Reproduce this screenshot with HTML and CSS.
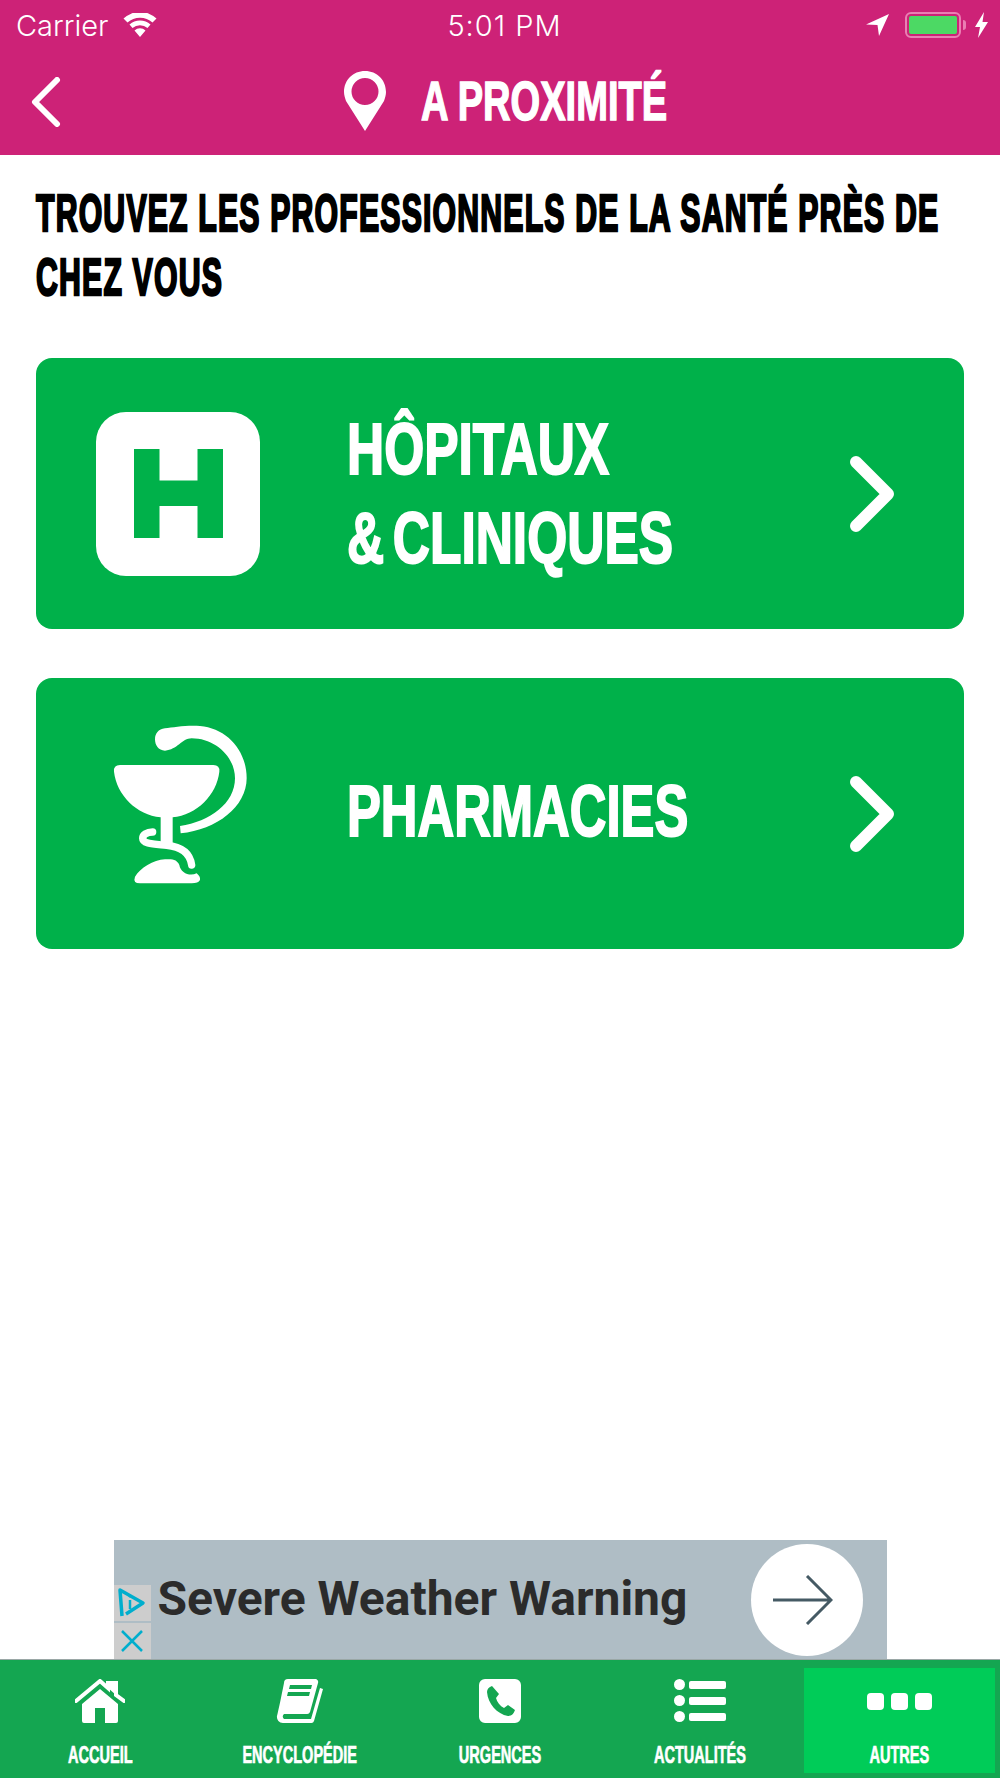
FILE: index.html
```html
<!DOCTYPE html>
<html lang="fr">
<head>
    <meta charset="UTF-8">
    <meta name="viewport" content="width=device-width, initial-scale=1.0">
    <title>A proximité</title>
    <link rel="stylesheet" href="styles.css">
</head>
<body>
<div class="app">
    <div class="top">
        <div class="status">
            <div class="status-left">
                <span>Carrier</span>
                <svg class="wifi" viewBox="0 0 34 24"><path d="M17 24l-5.500-6.500a8 8 0 0 1 11 0zM9.500 15L6.500 11.500a15.500 15.500 0 0 1 21 0L24.500 15a11.500 11.500 0 0 0-15 0zM4.500 9.500L0.500 5.500a24 24 0 0 1 33 0L29.500 9.500a19 19 0 0 0-25 0z" fill="#fff"/></svg>
            </div>
            <span class="clock">5:01 PM</span>
            <div class="status-right">
                <svg class="loc" viewBox="0 0 23 22"><path d="M23 0L0 10.500l11.500 0.500L13 22z" fill="#fff"/></svg>
                <div class="battery"><div class="battery-fill"></div></div>
                <div class="battery-nub"></div>
                <svg class="bolt" viewBox="0 0 13 26"><path d="M9 0L0 15h5l-2 11 10-16H7.500z" fill="#fff"/></svg>
            </div>
        </div>
        <div class="nav">
            <svg class="back" viewBox="0 0 30 50"><path d="M26 3L4 25l22 22" fill="none" stroke="#fff" stroke-width="6" stroke-linecap="round" stroke-linejoin="round"/></svg>
            <div class="nav-title">
                <svg class="pin" viewBox="0 0 42 60"><path fill-rule="evenodd" d="M21 0C9 0 0 9 0 21c0 3 1 6 2 9l19 30 19-30c1-3 2-6 2-9C42 9 33 0 21 0zM21 7a13.500 13.500 0 1 1 0 27 13.500 13.500 0 0 1 0-27z" fill="#fff"/></svg>
                <h1 class="cond title-text">A PROXIMITÉ</h1>
            </div>
        </div>
    </div>

    <div class="content">
        <h2 class="cond lead">TROUVEZ LES PROFESSIONNELS DE LA SANTÉ PRÈS DE CHEZ VOUS</h2>

        <a class="card">
            <div class="card-icon">
                <div class="h-box">
                    <svg viewBox="0 0 89 89" class="h-letter"><path d="M0 0h25.500v31.500h38V0H89v89H63.500V57h-38v32H0z" fill="#00b14a"/></svg>
                </div>
            </div>
            <div class="cond card-text">HÔPITAUX<br>&amp; CLINIQUES</div>
            <svg class="chev" viewBox="0 0 44 76"><path d="M6 6l32 32L6 70" fill="none" stroke="#fff" stroke-width="12" stroke-linecap="round" stroke-linejoin="round"/></svg>
        </a>

        <a class="card">
            <div class="card-icon">
                <svg class="pharma" viewBox="18 42 492 600">
                    <path d="M90 195H370Q390 195 388 215C380 285 320 345 248 352V432H212V352C140 345 80 285 72 215Q70 195 90 195Z" fill="#fff"/>
                    <path d="M225 85C250 82 290 75 330 78C410 85 470 150 470 235C470 320 380 390 272 400L270 378C360 365 435 310 435 235C435 170 375 115 305 115C275 115 262 150 225 152C205 152 195 135 195 118C195 100 205 88 225 85Z" fill="#fff"/>
                    <path d="M188 396C170 396 158 405 158 415C158 432 190 432 230 436C275 440 300 460 305 495" fill="none" stroke="#fff" stroke-width="22" stroke-linecap="round"/>
                    <path d="M135 530C150 505 190 480 225 478C250 476 262 480 268 495C272 520 300 530 320 520Q332 530 330 540Q325 550 305 550H150Q128 550 135 530Z" fill="#fff"/>
                </svg>
            </div>
            <div class="cond card-text single">PHARMACIES</div>
            <svg class="chev" viewBox="0 0 44 76"><path d="M6 6l32 32L6 70" fill="none" stroke="#fff" stroke-width="12" stroke-linecap="round" stroke-linejoin="round"/></svg>
        </a>
    </div>

    <div class="ad">
        <div class="ad-badges">
            <div class="ad-badge">
                <svg viewBox="0 0 30 32" width="30" height="32"><path d="M5 29L3 3l23 13L9 27" fill="none" stroke="#00aecd" stroke-width="3.500" stroke-linejoin="round"/><path d="M13 13v9" stroke="#00aecd" stroke-width="2.500"/><circle cx="13" cy="9" r="1.500" fill="#00aecd"/></svg>
            </div>
            <div class="ad-badge">
                <svg viewBox="0 0 26 26" width="26" height="26"><path d="M3 3l20 20M23 3L3 23" stroke="#00aecd" stroke-width="2.500"/></svg>
            </div>
        </div>
        <div class="ad-text">Severe Weather Warning</div>
        <div class="ad-go">
            <svg class="ad-arrow" viewBox="0 0 60 50" width="60" height="50"><path d="M0 25h58M34 1l24 24-24 24" fill="none" stroke="#455a64" stroke-width="3"/></svg>
        </div>
    </div>

    <div class="tabs">
        <div class="tab">
            <svg class="tab-icon" viewBox="0 0 50 44" width="50" height="44"><path d="M1 22L25 2l8 7V4h8v12l8 6" fill="none" stroke="#fff" stroke-width="4" stroke-linecap="round"/><path d="M7 25L25 10l18 15v17a2 2 0 0 1-2 2H30V29H20v15H9a2 2 0 0 1-2-2z" fill="#fff"/><path d="M33 4h8v12l-8-7z" fill="#fff"/></svg>
            <span class="cond tab-label">ACCUEIL</span>
        </div>
        <div class="tab">
            <svg class="tab-icon" viewBox="0 0 48 44" width="48" height="44"><path fill-rule="evenodd" d="M12 0h27a3 3 0 0 1 3 4l-8 29a3 3 0 0 1-3 2H8a3.500 3.500 0 0 0 0 5h27l9-31 3 1-9 32a3 3 0 0 1-3 2H7a6 6 0 0 1-6-7c2-8 4-18 7-33a4 4 0 0 1 4-4zM14 6l-1 4h22l1-4zM12 13l-1 4h22l1-4z" fill="#fff"/></svg>
            <span class="cond tab-label">ENCYCLOPÉDIE</span>
        </div>
        <div class="tab">
            <svg class="tab-icon" viewBox="0 0 42 44" width="42" height="44"><path fill-rule="evenodd" d="M6 0h30a6 6 0 0 1 6 6v32a6 6 0 0 1-6 6H6a6 6 0 0 1-6-6V6a6 6 0 0 1 6-6zM13 7c-3 1-5 3-5 6 1 12 10 22 21 24 4 0 6-3 7-6l-7-5-4 3c-4-2-7-6-8-10l3-4z" fill="#fff"/></svg>
            <span class="cond tab-label">URGENCES</span>
        </div>
        <div class="tab">
            <svg class="tab-icon" viewBox="0 0 52 44" width="52" height="44"><circle cx="5.500" cy="5.500" r="5.500" fill="#fff"/><circle cx="5.500" cy="21.500" r="5.500" fill="#fff"/><circle cx="5.500" cy="37.500" r="5.500" fill="#fff"/><rect x="15" y="2" width="37" height="8" rx="2" fill="#fff"/><rect x="15" y="18" width="37" height="8" rx="2" fill="#fff"/><rect x="15" y="34" width="37" height="8" rx="2" fill="#fff"/></svg>
            <span class="cond tab-label">ACTUALITÉS</span>
        </div>
        <div class="tab active">
            <div class="tab-icon dots"><i></i><i></i><i></i></div>
            <span class="cond tab-label">AUTRES</span>
        </div>
    </div>
</div>
</body>
</html>
```

FILE: styles.css
```css
* {
    margin: 0;
    padding: 0;
    box-sizing: border-box;
}

body {
    background: #fff;
    font-family: "Liberation Sans", Arial, sans-serif;
    overflow: hidden;
}

.app {
    width: 1000px;
    height: 1778px;
    display: flex;
    flex-direction: column;
}

/* no condensed face installed: squeeze bold sans and thicken it */
.cond {
    font-family: "Liberation Sans", Arial, sans-serif;
    font-weight: 700;
    -webkit-text-stroke: 1.5px currentColor;
}

.top {
    height: 155px;
    background: #cd2277;
    color: #fff;
}

.status {
    height: 50px;
    padding: 0 12px 0 16px;
    display: grid;
    grid-template-columns: 1fr auto 1fr;
    align-items: center;
    font-family: Inter, sans-serif;
    font-weight: 300;
    font-size: 29px;
}

.status-left {
    display: flex;
    align-items: center;
    gap: 15px;
}

.wifi {
    width: 34px;
    height: 24px;
}

.clock {
    margin-left: 5px;
    letter-spacing: 1px;
}

.status-right {
    display: flex;
    align-items: center;
    justify-content: flex-end;
}

.loc {
    width: 23px;
    height: 22px;
    margin-right: 16px;
}

.battery {
    width: 56px;
    height: 26px;
    border: 2px solid #ea7fb3;
    border-radius: 6px;
    padding: 2px;
}

.battery-fill {
    height: 100%;
    background: #4cd964;
    border-radius: 2px;
}

.battery-nub {
    width: 3px;
    height: 10px;
    margin-left: 2px;
    background: #ea7fb3;
    border-radius: 0 3px 3px 0;
}

.bolt {
    width: 13px;
    height: 26px;
    margin-left: 9px;
}

.nav {
    height: 105px;
    padding: 0 0 1px 31px;
    display: flex;
    align-items: center;
}

.back {
    width: 30px;
    height: 50px;
}

.nav-title {
    display: flex;
    align-items: center;
    margin: 0 0 2px 283px;
}

.pin {
    width: 42px;
    height: 60px;
}

.title-text {
    font-size: 56px;
    line-height: 60px;
    margin-left: 35px;
    white-space: nowrap;
    transform: scaleX(0.68);
    transform-origin: left center;
}

.content {
    flex: 1;
    padding: 26px 36px 0;
}

.lead {
    width: 1590px;
    font-size: 52px;
    line-height: 64px;
    letter-spacing: 2px;
    color: #000;
    -webkit-text-stroke-width: 2.5px;
    transform: scaleX(0.582);
    transform-origin: left top;
    margin-bottom: 49px;
}

.card {
    display: flex;
    align-items: center;
    height: 271px;
    margin-bottom: 49px;
    padding: 0 70px 0 60px;
    background: #00b14a;
    border-radius: 16px;
    color: #fff;
}

.card-icon {
    width: 164px;
    flex-shrink: 0;
}

.h-box {
    width: 164px;
    height: 164px;
    background: #fff;
    border-radius: 30px;
    display: flex;
    align-items: center;
    justify-content: center;
}

.h-letter {
    width: 89px;
    height: 89px;
}

.pharma {
    display: block;
    width: 164px;
    height: 200px;
}

.card-text {
    margin-left: 87px;
    font-size: 72px;
    line-height: 89px;
    word-spacing: -8px;
    -webkit-text-stroke-width: 2px;
    white-space: nowrap;
    transform: scaleX(0.715);
    transform-origin: left center;
}

.card-text.single {
    padding-bottom: 5px;
    transform: scaleX(0.705);
}

.chev {
    width: 44px;
    height: 76px;
    margin-left: auto;
    flex-shrink: 0;
}

.ad {
    width: 773px;
    height: 119px;
    margin: 0 auto;
    background: #afbdc5;
    display: flex;
    align-items: center;
}

.ad-badges {
    width: 37px;
    align-self: flex-end;
    display: flex;
    flex-direction: column;
    gap: 2px;
}

.ad-badge {
    height: 36px;
    background: #cdcdcd;
    display: flex;
    align-items: center;
    justify-content: center;
}

.ad-text {
    margin: 0 0 2px 7px;
    font-family: Roboto, sans-serif;
    font-weight: 700;
    font-size: 48px;
    line-height: 56px;
    color: #2b2b2b;
    white-space: nowrap;
}

.ad-go {
    width: 112px;
    height: 112px;
    margin: 0 24px 0 auto;
    border-radius: 50%;
    background: #fff;
    display: flex;
    align-items: center;
    justify-content: center;
}

.ad-arrow {
    margin-right: 7px;
}

.tabs {
    height: 119px;
    padding: 8px 0 5px;
    background: #14a651;
    display: grid;
    grid-template-columns: repeat(5, 200px);
    border-top: 1px solid #9aa7a6;
}

.tab {
    display: flex;
    flex-direction: column;
    align-items: center;
    color: #fff;
    padding-top: 11px;
}

.tab.active {
    background: #00cc58;
    margin: 0 5px 0 4px;
}

.tab-icon {
    height: 44px;
    display: block;
}

.dots {
    display: flex;
    align-items: center;
    gap: 7px;
}

.dots i {
    width: 17px;
    height: 17px;
    background: #fff;
    border-radius: 4px;
}

.tab-label {
    margin-top: 19px;
    font-size: 24px;
    line-height: 26px;
    -webkit-text-stroke-width: 0.7px;
    white-space: nowrap;
    transform: scaleX(0.605);
}
```
